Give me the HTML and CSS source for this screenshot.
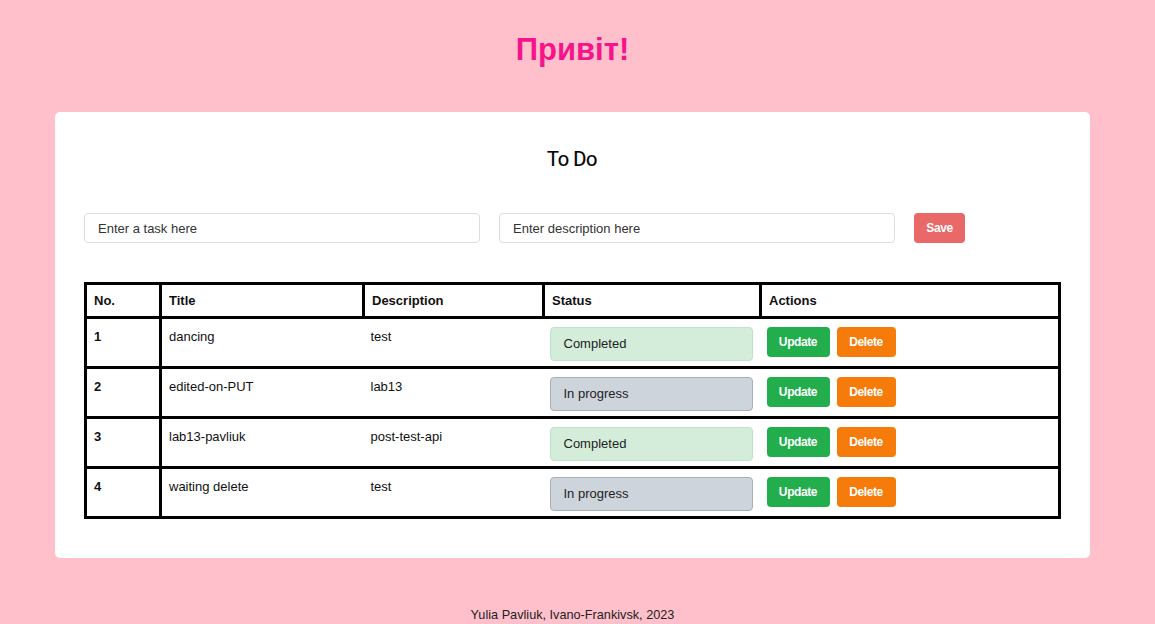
FILE: index.html
```html
<!DOCTYPE html>
<html lang="uk">
<head>
<meta charset="utf-8">
<title>To Do</title>
<link rel="stylesheet" href="styles.css">
</head>
<body>
<header class="top">
  <h1 class="greeting">Привіт!</h1>
</header>
<main class="card">
  <h2 class="card-title">To Do</h2>
  <form class="add-form">
    <input class="field" type="text" placeholder="Enter a task here">
    <input class="field" type="text" placeholder="Enter description here">
    <button class="btn btn-save" type="button">Save</button>
  </form>
  <table class="tasks">
    <colgroup>
      <col class="c-no"><col class="c-title"><col class="c-desc"><col class="c-status"><col class="c-actions">
    </colgroup>
    <thead>
      <tr><th>No.</th><th>Title</th><th>Description</th><th>Status</th><th>Actions</th></tr>
    </thead>
    <tbody>
      <tr>
        <td class="num">1</td><td class="txt">dancing</td><td class="txt">test</td>
        <td class="box"><div class="status done">Completed</div></td>
        <td class="box"><div class="actions"><button class="btn btn-update" type="button">Update</button><button class="btn btn-delete" type="button">Delete</button></div></td>
      </tr>
      <tr>
        <td class="num">2</td><td class="txt">edited-on-PUT</td><td class="txt">lab13</td>
        <td class="box"><div class="status progress">In progress</div></td>
        <td class="box"><div class="actions"><button class="btn btn-update" type="button">Update</button><button class="btn btn-delete" type="button">Delete</button></div></td>
      </tr>
      <tr>
        <td class="num">3</td><td class="txt">lab13-pavliuk</td><td class="txt">post-test-api</td>
        <td class="box"><div class="status done">Completed</div></td>
        <td class="box"><div class="actions"><button class="btn btn-update" type="button">Update</button><button class="btn btn-delete" type="button">Delete</button></div></td>
      </tr>
      <tr>
        <td class="num">4</td><td class="txt">waiting delete</td><td class="txt">test</td>
        <td class="box"><div class="status progress">In progress</div></td>
        <td class="box"><div class="actions"><button class="btn btn-update" type="button">Update</button><button class="btn btn-delete" type="button">Delete</button></div></td>
      </tr>
    </tbody>
  </table>
</main>
<footer class="footer">Yulia Pavliuk, Ivano-Frankivsk, 2023</footer>
</body>
</html>
```
FILE: styles.css
```css
* { box-sizing: border-box; }
html, body { margin: 0; padding: 0; }
body {
  background: #ffc0cb;
  font-family: "Liberation Sans", Arial, sans-serif;
  color: #111;
  width: 1145px;
  height: 624px;
  overflow: hidden;
}
.top {
  padding-top: 32px;
  text-align: center;
}
.greeting {
  margin: 0;
  font-size: 31px;
  line-height: 36px;
  font-weight: bold;
  color: #f5148c;
}
.card {
  margin: 44px 0 0 55px;
  width: 1035px;
  height: 446px;
  background: #fff;
  border-radius: 5px;
  padding: 36px 30px 0 29px;
}
.card-title {
  margin: 0;
  text-align: center;
  font-family: Roboto, "Liberation Sans", sans-serif;
  font-weight: 400;
  font-size: 20px;
  line-height: 22px;
  color: #000;
  letter-spacing: -0.4px;
  -webkit-text-stroke: 0.2px #000;
}
.add-form {
  margin-top: 43px;
  display: flex;
  gap: 19px;
  height: 30px;
}
.field {
  width: 396px;
  height: 30px;
  border: 1px solid #dedede;
  border-radius: 4px;
  padding: 0 13px;
  font-family: "Liberation Sans", Arial, sans-serif;
  font-size: 13px;
  color: #222;
  outline: none;
}
.field::placeholder { color: #333; }
.btn {
  border: none;
  border-radius: 4px;
  color: #fff;
  font-family: "Liberation Sans", Arial, sans-serif;
  font-weight: bold;
  font-size: 12px;
  letter-spacing: -0.4px;
  height: 30px;
  padding: 0;
  cursor: pointer;
}
.btn-save { width: 51px; background: #e96868; }
.tasks {
  margin-top: 39px;
  margin-left: 0;
  width: 974px;
  border-collapse: collapse;
  border: 3px solid #000;
  font-size: 13px;
  table-layout: fixed;
}
.c-no { width: 75px; }
.c-title { width: 203px; }
.c-desc { width: 180px; }
.c-status { width: 217px; }
.c-actions { width: 299px; }
.tasks th {
  border: 3px solid #000;
  text-align: left;
  font-weight: bold;
  height: 34px;
  padding: 0 7px;
  vertical-align: middle;
}
.tasks td {
  border-bottom: 3px solid #000;
  height: 50px;
  vertical-align: top;
  padding: 10px 7px 0;
  line-height: 16px;
}
.tasks td:first-child { border-right: 3px solid #000; }
.tasks td.num { font-weight: bold; }
.tasks td.box { padding: 8px 6px 0; }
.status {
  width: 203px;
  height: 34px;
  border-radius: 4px;
  padding: 0 13px;
  line-height: 32px;
  font-size: 13px;
  color: #222;
}
.status.done { background: #d4edda; border: 1px solid #bfe3c8; }
.status.progress { background: #ced4dc; border: 1px solid #a9afb6; }
.actions { display: flex; gap: 7px; }
.btn-update { width: 63px; background: #22ae4c; }
.btn-delete { width: 59px; background: #f57c0a; }
.footer {
  margin-top: 50px;
  text-align: center;
  font-size: 12.7px;
  line-height: 14px;
  color: #222;
}
```
